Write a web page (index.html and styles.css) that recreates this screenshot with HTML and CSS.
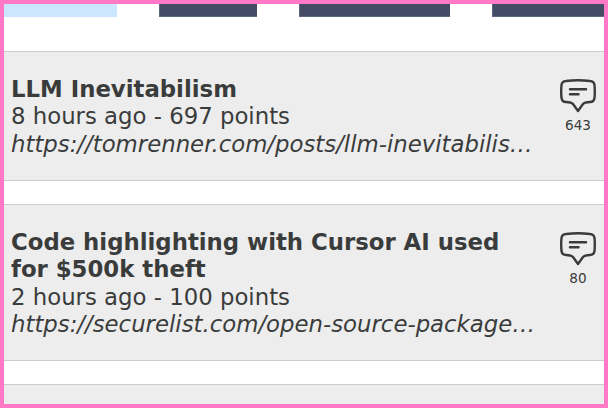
FILE: index.html
```html
<!DOCTYPE html>
<html lang="en"><head><meta charset="utf-8"><title>Stories</title><link rel="stylesheet" href="styles.css"></head>
<body>
<nav class="tabs"><span class="tab tab-active"></span><span class="tab tab-second"></span><span class="tab tab-third"></span><span class="tab tab-last"></span></nav>
<main class="stories">
<article class="story">
<div class="details"><h2 class="title">LLM Inevitabilism</h2><p class="meta">8 hours ago - 697 points</p><p class="link">https://tomrenner.com/posts/llm-inevitabilis…</p></div>
<div class="comments"><svg class="bubble" viewBox="0 0 36 34"><path class="outline" d="M6 2Q18 .6 30 2Q34 2.3 34.5 6Q35.1 12 34.5 19Q34 22.8 30 23Q24.5 23.2 23 25L18 32L13 25Q11.5 23.2 6 23Q2 22.8 1.5 19Q.9 12 1.5 6Q2 2.3 6 2Z"/><path class="lines" d="M10 10.2H26M10 15.3H18.5"/></svg><span class="count">643</span></div>
</article>
<article class="story">
<div class="details"><h2 class="title">Code highlighting with Cursor AI used for $500k theft</h2><p class="meta">2 hours ago - 100 points</p><p class="link">https://securelist.com/open-source-package…</p></div>
<div class="comments"><svg class="bubble" viewBox="0 0 36 34"><path class="outline" d="M6 2Q18 .6 30 2Q34 2.3 34.5 6Q35.1 12 34.5 19Q34 22.8 30 23Q24.5 23.2 23 25L18 32L13 25Q11.5 23.2 6 23Q2 22.8 1.5 19Q.9 12 1.5 6Q2 2.3 6 2Z"/><path class="lines" d="M10 10.2H26M10 15.3H18.5"/></svg><span class="count">80</span></div>
</article>
<article class="story story-next"></article>
</main>
</body></html>
```
FILE: styles.css
```css
* { box-sizing: border-box; }
body { margin: 0; width: 608px; height: 408px; overflow: hidden; border: 4px solid #ff79c6; background: #fff; color: #3a3c3c; font-family: "DejaVu Sans", sans-serif; }
.tabs { display: flex; height: 13px; }
.tab { height: 13px; background: #444b64; border: solid #5d6680; border-width: 0 0 1px 1px; flex-shrink: 0; }
.tab-active { width: 113px; background: #cce6ff; border: 0; margin-right: 42px; }
.tab-second { width: 98px; margin-right: 42px; }
.tab-third { width: 151px; margin-right: 42px; }
.tab-last { width: 112px; }
.stories { display: flex; flex-direction: column; gap: 23px; margin-top: 34px; }
.story { display: flex; padding: 24px 8px 22.1px 7px; background: #ededed; border: solid #ccc; border-width: 1px 0; }
.story-next { height: 19.7px; padding: 0; border-bottom: 0; }
.details { width: 530px; flex-shrink: 0; }
.title, .meta, .link { margin: 0; font-size: 22.8px; line-height: 27.3px; }
.link { font-style: italic; white-space: nowrap; }
.comments { display: flex; flex-direction: column; align-items: center; width: 36px; margin-left: auto; padding-top: 3px; }
.bubble { width: 36px; height: 34px; fill: none; stroke: #3a3c3c; stroke-linejoin: round; stroke-linecap: round; }
.outline { stroke-width: 2.4; }
.lines { stroke-width: 2.5; }
.count { margin-top: 4px; font-size: 13.6px; line-height: 17px; }
```
